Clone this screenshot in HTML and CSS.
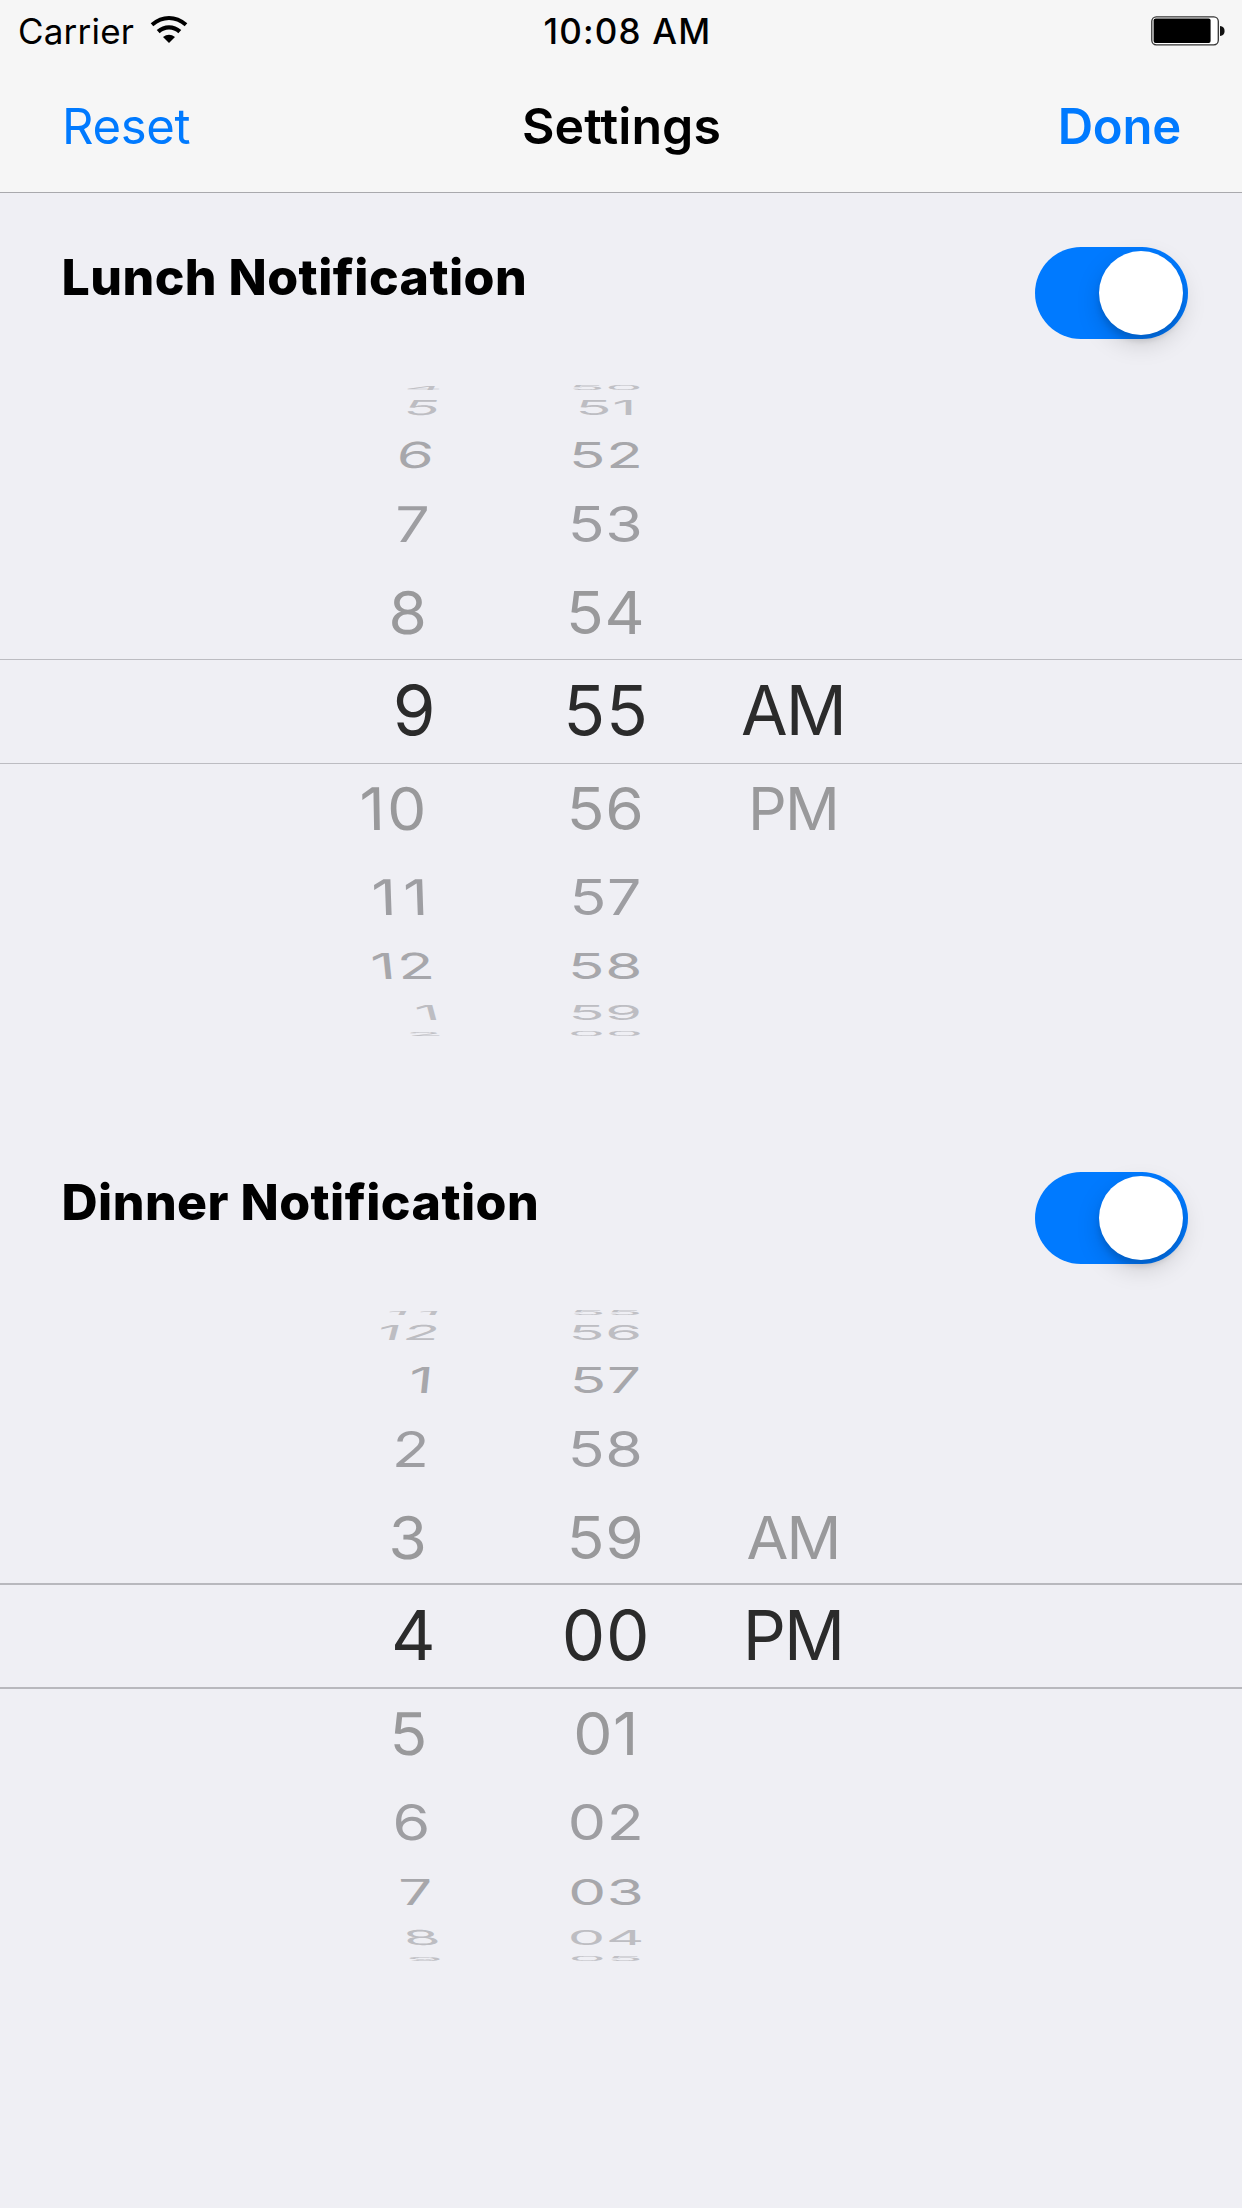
FILE: index.html
```html
<!DOCTYPE html>
<html lang="en">
<head>
<meta charset="utf-8">
<title>Settings</title>
<link rel="stylesheet" href="styles.css">
</head>
<body>
<header class="top">
  <div class="status">
    <div class="carrier"><span class="carrier-name">Carrier</span>
      <svg class="wifi" width="38" height="28" viewBox="0 0 38 28" fill="none" stroke="#000">
        <path d="M2 8.8Q10 2 19 2T36 8.8" stroke-width="4"/>
        <path d="M8.2 15.6Q13 11.4 19 11.4T29.8 15.6" stroke-width="4.4"/>
        <path d="M13 21Q19 16.3 25 21L19 27Z" fill="#000" stroke="none"/>
      </svg>
    </div>
    <span class="time">10:08 AM</span>
    <svg class="battery" width="74" height="30" viewBox="0 0 74 30">
      <rect x=".8" y=".8" width="66.5" height="28" rx="4.5" fill="#fff" stroke="#333" stroke-width="1.3"/>
      <rect x="2.6" y="2.6" width="57" height="24.4" rx="2" fill="#000"/>
      <path d="M69 10Q73.6 10.5 73.6 15T69 20Z" fill="#111"/>
    </svg>
  </div>
  <nav class="nav">
    <a class="reset">Reset</a>
    <h1 class="title">Settings</h1>
    <a class="done">Done</a>
  </nav>
</header>
<main>
  <section class="group">
    <div class="group-head"><h2 class="label">Lunch Notification</h2><div class="switch"><div class="knob"></div></div></div>
    <div class="wheel">
      <div class="row up r5"><span class="h">4</span><span class="m">50</span><span class="p"></span></div>
      <div class="row up r4"><span class="h">5</span><span class="m">51</span><span class="p"></span></div>
      <div class="row up r3"><span class="h">6</span><span class="m">52</span><span class="p"></span></div>
      <div class="row up r2"><span class="h">7</span><span class="m">53</span><span class="p"></span></div>
      <div class="row up r1"><span class="h">8</span><span class="m">54</span><span class="p"></span></div>
      <div class="row r0"><span class="h">9</span><span class="m">55</span><span class="p">AM</span></div>
      <div class="row r1"><span class="h">10</span><span class="m">56</span><span class="p">PM</span></div>
      <div class="row r2"><span class="h ones">11</span><span class="m">57</span><span class="p"></span></div>
      <div class="row r3"><span class="h">12</span><span class="m">58</span><span class="p"></span></div>
      <div class="row r4"><span class="h">1</span><span class="m">59</span><span class="p"></span></div>
      <div class="row r5"><span class="h">2</span><span class="m">00</span><span class="p"></span></div>
    </div>
  </section>
  <section class="group strong">
    <div class="group-head"><h2 class="label">Dinner Notification</h2><div class="switch"><div class="knob"></div></div></div>
    <div class="wheel">
      <div class="row up r5"><span class="h ones">11</span><span class="m">55</span><span class="p"></span></div>
      <div class="row up r4"><span class="h">12</span><span class="m">56</span><span class="p"></span></div>
      <div class="row up r3"><span class="h">1</span><span class="m">57</span><span class="p"></span></div>
      <div class="row up r2"><span class="h">2</span><span class="m">58</span><span class="p"></span></div>
      <div class="row up r1"><span class="h">3</span><span class="m">59</span><span class="p">AM</span></div>
      <div class="row r0"><span class="h">4</span><span class="m">00</span><span class="p">PM</span></div>
      <div class="row r1"><span class="h">5</span><span class="m">01</span><span class="p"></span></div>
      <div class="row r2"><span class="h">6</span><span class="m">02</span><span class="p"></span></div>
      <div class="row r3"><span class="h">7</span><span class="m">03</span><span class="p"></span></div>
      <div class="row r4"><span class="h">8</span><span class="m">04</span><span class="p"></span></div>
      <div class="row r5"><span class="h">9</span><span class="m">05</span><span class="p"></span></div>
    </div>
  </section>
</main>
</body>
</html>
```
FILE: styles.css
```css
* { box-sizing: border-box; }
body { margin: 0; width: 1242px; height: 2208px; overflow: hidden; background: #efeff4; color: #000; font-family: Inter, "Liberation Sans", sans-serif; }
h1, h2 { margin: 0; }

.top { height: 193px; background: #f6f6f6; border-bottom: 1px solid #a9a9ad; }
.status { height: 60px; padding: 0 17px 0 18px; display: grid; grid-template-columns: 1fr auto 1fr; align-items: center; font-size: 35px; line-height: 60px; }
.carrier { display: flex; align-items: center; gap: 16px; }
.carrier-name { letter-spacing: .2px; padding-top: 1px; }
.wifi { margin-bottom: 1px; }
.time { font-weight: 500; letter-spacing: 1.2px; padding: 1px 0 0 12px; }
.battery { justify-self: end; }
.nav { height: 132px; padding: 1px 61px 0 62px; display: grid; grid-template-columns: 1fr auto 1fr; align-items: center; font-size: 49px; line-height: 131px; }
.reset, .done { color: #007aff; }
.reset { letter-spacing: -.3px; }
.title { font-size: 50px; font-weight: 600; letter-spacing: .1px; }
.done { justify-self: end; font-weight: 600; letter-spacing: -.2px; }

.group { height: 925px; }
.group-head { height: 192px; padding: 54px 54px 0 61.5px; display: flex; justify-content: space-between; align-items: flex-start; }
.label { font-size: 50px; line-height: 60px; font-weight: 800; letter-spacing: .45px; white-space: nowrap; }
.switch { width: 153px; height: 92px; border-radius: 46px; background: #007aff; padding: 4px 5px 4px 64px; }
.knob { width: 84px; height: 84px; border-radius: 50%; background: #fff; box-shadow: 0 9px 24px rgba(0,0,0,.15), 0 6px 6px rgba(0,0,0,.12); }

/* Each row turns further away from the viewer the farther it is from the middle. */
.wheel { display: flex; flex-direction: column; font-size: 69px; line-height: 84px; }
.row { --dy: -2px; flex: none; display: grid; grid-template-columns: 434px 345px 28px; grid-template-rows: 100%; align-items: center; }
.row span { height: 84px; white-space: nowrap; }
.row .h { justify-self: end; letter-spacing: 2.5px; margin-right: -3px; transform-origin: right center; transform: translate(var(--dx), var(--dy)) skewX(var(--lean)) scale(var(--sx), var(--sy)); }
.row .ones { letter-spacing: 8px; margin-right: -6px; }
.m { justify-self: center; letter-spacing: .8px; transform: translate(-.5px, var(--dy)) scale(var(--sx), var(--sy)); }
.p { width: 120px; justify-self: center; text-align: center; letter-spacing: -2px; transform: translateY(var(--dy)) scale(var(--sx), var(--sy)); }

.r0 { height: 105px; color: #2b2b2b; --sx: 1; --sy: 1; --dx: 1px; --lean: 0deg; border: solid #bcbcc1; border-width: 1px 0; }
.r0 .p { --sx: .98; }
.strong .r0 { height: 106px; margin-top: -1px; border-color: #b8b8bd; border-width: 2px 0; --dy: -1px; }
.r1 { height: 93px; color: #99999b; --sx: .9; --sy: .85; --dx: -8px; --lean: 1deg; }
.r1 .p { --sx: .88; }
.r2 { height: 83px; color: #9e9ea2; --sx: .88; --sy: .71; --dx: -5px; --lean: 2deg; }
.r3 { height: 57px; color: #a7a7ab; --sx: .87; --sy: .52; --dx: -1px; --lean: 6deg; }
.r4 { height: 36px; color: #bdbdc2; --sx: .86; --sy: .3; --dx: 5px; --lean: 15deg; }
.r5 { height: 5px; color: #c0c0c5; --sx: .86; --sy: .08; --dx: 8px; --lean: 30deg; }
.row.up { --dy: -.5px; }
.row.r3, .row.r4, .row.r5 { --dy: -2.5px; }
.row.up.r3, .row.up.r4, .row.up.r5 { --dy: -.5px; }
.up.r1 { --lean: -1deg; }
.up.r2 { --lean: -2deg; }
.up.r3 { --lean: -6deg; }
.up.r4 { --lean: -15deg; }
.up.r5 { --lean: -30deg; }
```
